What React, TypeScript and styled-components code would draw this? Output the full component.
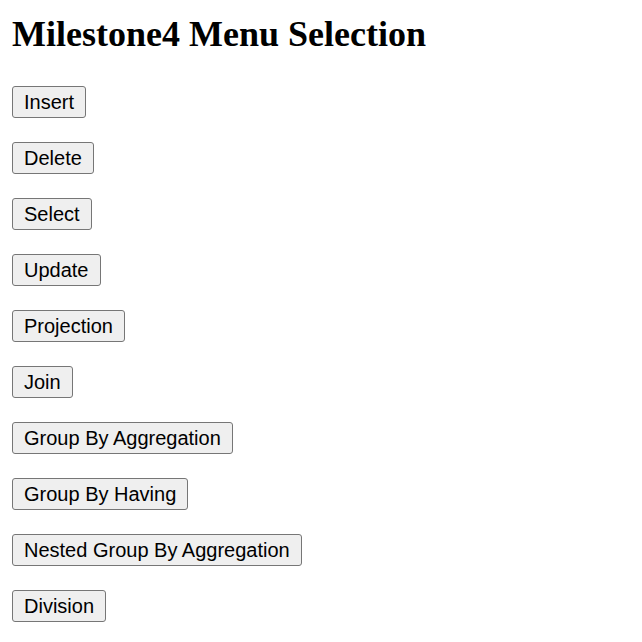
import React from "react";
import styled, { createGlobalStyle } from "styled-components";

const Global = createGlobalStyle`
  html, body { margin: 0; padding: 0; background: #ffffff; }
`;

const Page = styled.div`
  padding: 12px 12px 20px 12px;
  display: flex;
  flex-direction: column;
`;

const Title = styled.h1`
  margin: 0 0 30px 0;
  font-family: "Liberation Serif", "Times New Roman", serif;
  font-weight: bold;
  font-size: 36px;
  line-height: 44px;
  color: #000;
`;

const Menu = styled.div`
  display: flex;
  flex-direction: column;
  align-items: flex-start;
  gap: 24px;
`;

const MenuButton = styled.button`
  font-family: "Liberation Sans", Arial, sans-serif;
  font-size: 20px;
  line-height: 24px;
  padding: 3px 11px;
  color: #000;
  background: #efefef;
  border: 1px solid #767676;
  border-radius: 3px;
  cursor: pointer;
`;

const items = [
  "Insert",
  "Delete",
  "Select",
  "Update",
  "Projection",
  "Join",
  "Group By Aggregation",
  "Group By Having",
  "Nested Group By Aggregation",
  "Division",
];

export default function App() {
  return (
    <>
      <Global />
      <Page>
        <Title>Milestone4 Menu Selection</Title>
        <Menu>
          {items.map((label) => (
            <MenuButton key={label} type="button">
              {label}
            </MenuButton>
          ))}
        </Menu>
      </Page>
    </>
  );
}
